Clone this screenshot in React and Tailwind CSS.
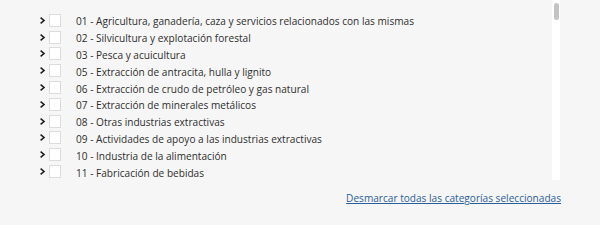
import React from "react";

const items = [
  "01 - Agricultura, ganadería, caza y servicios relacionados con las mismas",
  "02 - Silvicultura y explotación forestal",
  "03 - Pesca y acuicultura",
  "05 - Extracción de antracita, hulla y lignito",
  "06 - Extracción de crudo de petróleo y gas natural",
  "07 - Extracción de minerales metálicos",
  "08 - Otras industrias extractivas",
  "09 - Actividades de apoyo a las industrias extractivas",
  "10 - Industria de la alimentación",
  "11 - Fabricación de bebidas",
];

function Chevron() {
  return (
    <svg width="7" height="9" viewBox="0 0 7 9" className="shrink-0">
      <path d="M1.6 1.6 L5 4.5 L1.6 7.4" fill="none" stroke="#1e1e1e" strokeWidth="1.6" />
    </svg>
  );
}

export default function App() {
  return (
    <div
      className="w-[600px] h-[225px] bg-[#f6f6f6] overflow-hidden text-[#2e2e2e]"
      style={{ fontFamily: '"Open Sans", sans-serif' }}
    >
      <div className="flex">
        <div className="w-[552px] h-[180px] pt-[12px] pl-[39px]">
          {items.map((t) => (
            <div key={t} className="flex items-center h-[16.8px]">
              <Chevron />
              <div className="ml-[3px] w-[12px] h-[13px] bg-white border border-[#dcdcdc] shrink-0" />
              <span className="ml-[15px] mt-[2px] text-[10.1px] leading-none whitespace-nowrap">{t}</span>
            </div>
          ))}
        </div>
        <div className="w-[8px] h-[180px] bg-white flex justify-center pt-[3px]">
          <div className="w-[5px] h-[17px] rounded-full bg-[#c4c4c4]" />
        </div>
      </div>
      <div className="flex justify-end pr-[39px] pt-[13px]">
        <a href="#" className="text-[10.1px] text-[#2a6099] underline leading-none">
          Desmarcar todas las categorías seleccionadas
        </a>
      </div>
    </div>
  );
}
